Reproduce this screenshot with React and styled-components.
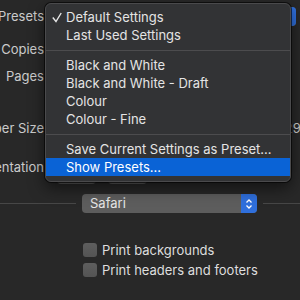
import styled, { createGlobalStyle } from 'styled-components';

const GlobalStyle = createGlobalStyle`
  html, body {
    margin: 0;
    padding: 0;
    background: #282828;
    overflow: hidden;
  }
  body {
    font-family: Inter, "Noto Sans", "Liberation Sans", sans-serif;
    font-size: 13px;
    -webkit-font-smoothing: antialiased;
  }
`;

const menuItems = [
  { label: 'Default Settings', checked: true },
  { label: 'Last Used Settings' },
  { sep: true },
  { label: 'Black and White' },
  { label: 'Black and White - Draft' },
  { label: 'Colour' },
  { label: 'Colour - Fine' },
  { sep: true },
  { label: 'Save Current Settings as Preset...' },
  { label: 'Show Presets...', active: true },
];

const Stepper = () => (
  <StepBox>
    <svg width="8" height="12" viewBox="0 0 8 12">
      <polyline points="1.5,4.5 4,2 6.5,4.5" fill="none" stroke="#fff" strokeWidth="1.3" />
      <polyline points="1.5,7.5 4,10 6.5,7.5" fill="none" stroke="#fff" strokeWidth="1.3" />
    </svg>
  </StepBox>
);

const Check = () => (
  <CheckMark width="10" height="11" viewBox="0 0 10 11">
    <polyline points="0.8,5.5 4,9.5 9.2,1" fill="none" stroke="#e6e6e6" strokeWidth="1.4" />
  </CheckMark>
);

const App = () => {
  return (
    <>
      <GlobalStyle />
      <Dialog>
        <Form>
          <Row $top={6}>
            <Label>Presets</Label>
            <Popup $width={242}>
              <span>Default Settings</span>
              <Stepper />
            </Popup>
          </Row>
          <Row $top={13}>
            <Label>Copies</Label>
            <Field $width={40}>1</Field>
          </Row>
          <Row $top={7}>
            <Label>Pages</Label>
            <Field $width={60}>All</Field>
          </Row>
          <Row $top={32}>
            <Label>Paper Size</Label>
            <Popup $width={177}>
              <span>A4</span>
              <Stepper />
            </Popup>
            <Hint>210 by 297 mm</Hint>
          </Row>
          <Row $top={21} $align="flex-start">
            <Label>Orientation</Label>
            <Segments>
              <Segment />
              <Segment />
            </Segments>
          </Row>
        </Form>

        <Section>
          <Rule $width={76} />
          <Popup $width={175}>
            <span>Safari</span>
            <Stepper />
          </Popup>
          <Rule />
        </Section>

        <Options>
          <Option>
            <Box />
            <span>Print backgrounds</span>
          </Option>
          <Option>
            <Box />
            <span>Print headers and footers</span>
          </Option>
        </Options>

        <Menu>
          {menuItems.map((item, i) =>
            item.sep ? (
              <Separator key={i} />
            ) : (
              <Item key={i} $active={item.active}>
                {item.checked && <Check />}
                {item.label}
              </Item>
            )
          )}
        </Menu>
      </Dialog>
    </>
  );
};

const Dialog = styled.div`
  position: relative;
  width: 300px;
  height: 300px;
  overflow: hidden;
  background: #282828;
`;

const Form = styled.div`
  display: flex;
  flex-direction: column;
`;

const Row = styled.div`
  display: flex;
  align-items: ${(p) => p.$align || 'center'};
  gap: 10px;
  margin-top: ${(p) => p.$top}px;
  height: ${(p) => (p.$align ? 22 : 20)}px;
`;

const Label = styled.div`
  width: 44px;
  flex-shrink: 0;
  display: flex;
  justify-content: flex-end;
  white-space: nowrap;
  color: #cbcbcb;
  line-height: 16px;
`;

const Popup = styled.div`
  width: ${(p) => p.$width}px;
  height: 19px;
  flex-shrink: 0;
  display: flex;
  align-items: center;
  justify-content: space-between;
  box-sizing: border-box;
  padding-left: 8px;
  border-radius: 4px;
  background: #5d5d5d;
  color: #e6e6e6;
  line-height: 19px;
`;

const StepBox = styled.div`
  width: 16px;
  height: 19px;
  display: flex;
  align-items: center;
  justify-content: center;
  border-radius: 0 4px 4px 0;
  background: #2f6fdc;
`;

const Field = styled.div`
  width: ${(p) => p.$width}px;
  height: 20px;
  background: #3a3a3a;
  color: #e6e6e6;
  padding-left: 4px;
`;

const Hint = styled.div`
  color: #cbcbcb;
  white-space: nowrap;
`;

const Segments = styled.div`
  display: flex;
  gap: 12px;
  padding-left: 3px;
  margin-top: 3px;
`;

const Segment = styled.div`
  width: 39px;
  height: 22px;
  border-radius: 4px;
  background: #595959;
`;

const Section = styled.div`
  display: flex;
  align-items: center;
  gap: 6px;
  margin-top: 13px;
`;

const Rule = styled.div`
  height: 1px;
  background: #474747;
  ${(p) => (p.$width ? `width: ${p.$width}px;` : 'flex: 1;')}
`;

const Options = styled.div`
  display: flex;
  flex-direction: column;
  gap: 6px;
  margin-top: 30px;
  padding-left: 83px;
`;

const Option = styled.div`
  display: flex;
  align-items: center;
  gap: 5px;
  height: 14px;
  color: #dedede;
  white-space: nowrap;
`;

const Box = styled.div`
  width: 14px;
  height: 14px;
  box-sizing: border-box;
  border-radius: 3px;
  background: linear-gradient(#5e5e5e, #545454);
`;

const Menu = styled.div`
  position: absolute;
  left: 45px;
  top: 3px;
  width: 246px;
  box-sizing: border-box;
  padding: 4px 0 5px;
  border-radius: 6px;
  background: #323335;
  border: 1px solid #4a4a4c;
  box-shadow: 0 6px 16px rgba(0, 0, 0, 0.55), 0 0 0 1px rgba(0, 0, 0, 0.6);
`;

const Item = styled.div`
  position: relative;
  height: 18px;
  line-height: 18px;
  padding-left: 20px;
  white-space: nowrap;
  color: ${(p) => (p.$active ? '#ffffff' : '#e4e4e4')};
  background: ${(p) => (p.$active ? '#0a63d6' : 'transparent')};
`;

const CheckMark = styled.svg`
  position: absolute;
  left: 6px;
  top: 4px;
`;

const Separator = styled.div`
  height: 12px;
  display: flex;
  align-items: center;
  &::after {
    content: '';
    flex: 1;
    height: 1px;
    background: #4c4c4e;
  }
`;

export default App;
